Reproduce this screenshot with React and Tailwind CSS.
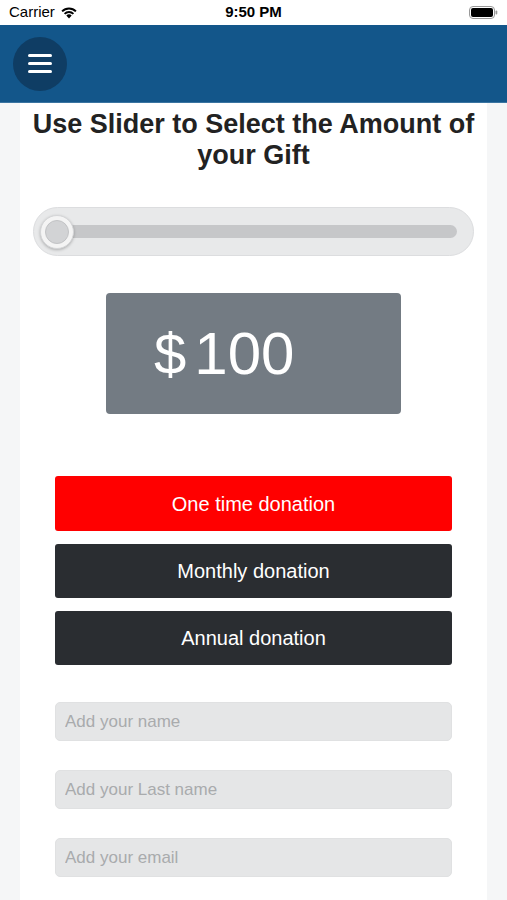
import { useState } from "react";

function StatusBar() {
  return (
    <div className="h-[25px] bg-white flex items-center justify-between px-[9px] text-[15px] text-black">
      <div className="flex items-center gap-[5px] w-[120px]">
        <span>Carrier</span>
        <svg width="18" height="13" viewBox="0 0 18 13">
          <path d="M9 12.5 L6.3 9.6 A3.8 3.8 0 0 1 11.7 9.6 Z" fill="#000" />
          <path d="M3.9 7.2 A7.2 7.2 0 0 1 14.1 7.2 L12.7 8.6 A5.2 5.2 0 0 0 5.3 8.6 Z" fill="#000" />
          <path d="M1.4 4.7 A10.8 10.8 0 0 1 16.6 4.7 L15.2 6.1 A8.8 8.8 0 0 0 2.8 6.1 Z" fill="#000" />
        </svg>
      </div>
      <span className="font-semibold">9:50 PM</span>
      <div className="w-[120px] flex justify-end">
        <svg width="29" height="13" viewBox="0 0 29 13">
          <rect x="0.5" y="0.5" width="25" height="12" rx="3.5" fill="none" stroke="#999" />
          <rect x="2" y="2" width="22" height="9" rx="2" fill="#000" />
          <rect x="26.5" y="4.5" width="1.8" height="4" rx="0.9" fill="#999" />
        </svg>
      </div>
    </div>
  );
}

function Header() {
  return (
    <div className="h-[78px] bg-[#13568a] border-b border-[#3a74a1] flex items-center pl-[13px]">
      <button className="w-[54px] h-[54px] rounded-full bg-[#0f3d64] flex flex-col items-center justify-center gap-[5px]">
        <span className="block w-[24px] h-[3px] rounded-full bg-white" />
        <span className="block w-[24px] h-[3px] rounded-full bg-white" />
        <span className="block w-[24px] h-[3px] rounded-full bg-white" />
      </button>
    </div>
  );
}

function Slider() {
  return (
    <div className="mx-[13px] h-[49px] rounded-full bg-[#e8e9ea] border border-[#dcdddf] flex items-center pl-[11px] pr-[16px] relative">
      <div className="flex-1 h-[13px] rounded-full bg-[#c6c7c9]" />
      <div className="absolute left-[6px] top-1/2 -translate-y-1/2 w-[34px] h-[34px] rounded-full bg-[#f4f4f4] border border-[#d5d6d8] shadow-[0_1px_3px_rgba(0,0,0,0.25)] flex items-center justify-center">
        <div className="w-[24px] h-[24px] rounded-full bg-[#d2d3d5] border border-[#c2c3c5]" />
      </div>
    </div>
  );
}

export default function App() {
  const [amount] = useState(100);
  const placeholders = ["Add your name", "Add your Last name", "Add your email"];

  return (
    <div className="w-[507px] h-[900px] overflow-hidden bg-[#f5f6f7] font-['Liberation_Sans',Arial,sans-serif]">
      <StatusBar />
      <Header />
      <div className="mx-[20px] w-[467px] bg-white pb-[40px]">
        <h1 className="pt-[6px] text-center text-[27px] leading-[31px] font-bold text-[#222]">
          Use Slider to Select the Amount of your Gift
        </h1>
        <div className="mt-[36px]">
          <Slider />
        </div>
        <div className="mt-[37px] ml-[86px] w-[295px] h-[121px] rounded-[4px] bg-[#737b83] flex items-center pl-[48px] text-white">
          <span className="text-[58px] leading-none">$</span>
          <span className="ml-[8px] text-[60px] leading-none">{amount}</span>
        </div>
        <div className="mt-[62px] mx-[35px] flex flex-col gap-[13px]">
          <button className="h-[55px] rounded-[3px] bg-[#ff0000] text-white text-[20px]">One time donation</button>
          <button className="h-[54px] rounded-[3px] bg-[#2a2d31] text-white text-[20px]">Monthly donation</button>
          <button className="h-[54px] rounded-[3px] bg-[#2a2d31] text-white text-[20px]">Annual donation</button>
        </div>
        <div className="mt-[37px] mx-[35px] flex flex-col gap-[29px]">
          {placeholders.map((p) => (
            <input
              key={p}
              placeholder={p}
              className="h-[39px] rounded-[5px] bg-[#e5e6e7] border border-[#e0e1e2] px-[9px] text-[17px] text-[#333] placeholder:text-[#a9abad] outline-none"
            />
          ))}
        </div>
      </div>
    </div>
  );
}
